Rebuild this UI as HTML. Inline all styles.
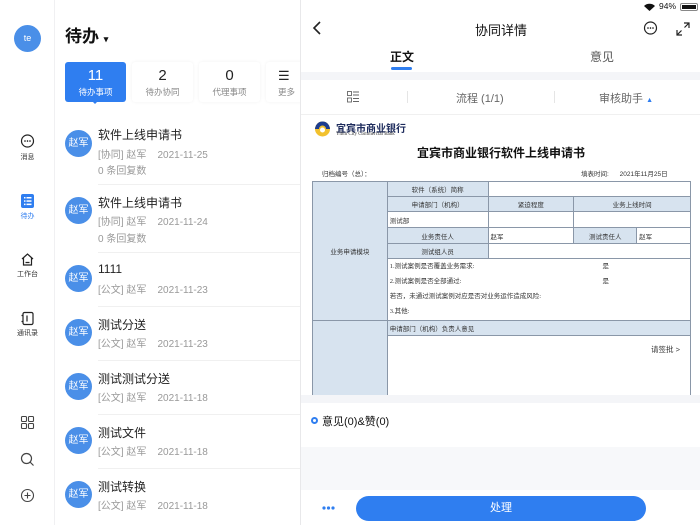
<!DOCTYPE html>
<html><head><meta charset="utf-8"><style>
*{margin:0;padding:0;box-sizing:border-box}
body{width:700px;height:525px;overflow:hidden;background:#fff;font-family:"Liberation Sans","Noto Sans CJK SC",sans-serif;position:relative;color:#222}
.a{position:absolute;white-space:nowrap}
.side{position:absolute;left:0;top:0;width:55px;height:525px;background:#fff;border-right:1px solid #f0f0f2}
.lbl{position:absolute;width:55px;text-align:center;font-size:7px;color:#333}
.list{position:absolute;left:55px;top:0;width:245px;height:525px;background:#fff}
.tab{position:absolute;top:62px;width:61px;height:40px;border-radius:3px;background:#fff;box-shadow:0 0 3px rgba(0,0,0,.06);text-align:center}
.tab b{display:block;font-size:15px;font-weight:normal;margin-top:5px;line-height:17px}
.tab span{display:block;font-size:8.5px;color:#888;margin-top:2px}
.av{position:absolute;left:10px;width:27px;height:27px;border-radius:50%;background:#4a8fe8;color:#fff;font-size:10px;text-align:center;line-height:27px}
.t{position:absolute;left:43px;font-size:12px;color:#222}
.s{position:absolute;left:43px;font-size:10px;color:#999}
.sep{position:absolute;left:43px;right:0;height:1px;background:#f0f0f0}
.right{position:absolute;left:300px;top:0;width:400px;height:525px;background:#fff;border-left:1px solid #e8e8ea}
table{border-collapse:collapse;position:absolute;left:11px;top:181px;width:379px;font-size:6.5px;font-family:"Liberation Serif","Noto Sans CJK SC",serif}
td{border:1px solid #8a97a8;padding:0 2px;color:#333}
.h{background:#d7e3ef;text-align:center}
</style></head><body>
<div class="a" style="left:5px;top:2px;font-size:8.5px;color:#111">下午8:41&nbsp;&nbsp;12月1日 周三</div>

<div class="side">
 <div class="a" style="left:14px;top:25px;width:27px;height:27px;border-radius:50%;background:#4a8fe8;color:#fff;font-size:9px;text-align:center;line-height:27px">te</div>
 <svg class="a" style="left:20px;top:134px" width="15" height="15" viewBox="0 0 15 15"><circle cx="7.5" cy="7" r="6" fill="none" stroke="#222" stroke-width="1.2"/><circle cx="5" cy="7" r=".8"/><circle cx="7.5" cy="7" r=".8"/><circle cx="10" cy="7" r=".8"/></svg>
 <div class="lbl" style="top:152px">消息</div>
 <svg class="a" style="left:21px;top:194px" width="13" height="14" viewBox="0 0 13 14"><rect width="13" height="14" rx="2" fill="#2f7ef0"/><g fill="#fff"><rect x="3" y="3" width="1.5" height="1.5"/><rect x="5.5" y="3" width="5" height="1.5"/><rect x="3" y="6.3" width="1.5" height="1.5"/><rect x="5.5" y="6.3" width="5" height="1.5"/><rect x="3" y="9.6" width="1.5" height="1.5"/><rect x="5.5" y="9.6" width="5" height="1.5"/></g></svg>
 <div class="lbl" style="top:211px;color:#2f7ef0">待办</div>
 <svg class="a" style="left:20px;top:252px" width="15" height="15" viewBox="0 0 15 15"><path d="M2 7L7.5 2L13 7M3.5 6V13H11.5V6M5.5 10.5H9.5" fill="none" stroke="#222" stroke-width="1.2"/></svg>
 <div class="lbl" style="top:269px">工作台</div>
 <svg class="a" style="left:20px;top:311px" width="15" height="15" viewBox="0 0 15 15"><rect x="3" y="1.5" width="10" height="12" rx="1.5" fill="none" stroke="#222" stroke-width="1.2"/><path d="M7 4.5V10.5M1.5 4.5H3.5M1.5 10.5H3.5" stroke="#222" stroke-width="1.2"/></svg>
 <div class="lbl" style="top:328px">通讯录</div>
 <svg class="a" style="left:20px;top:415px" width="15" height="15" viewBox="0 0 15 15"><g fill="none" stroke="#444" stroke-width="1.1"><rect x="1.5" y="1.5" width="5" height="5" rx="1"/><rect x="8.5" y="1.5" width="5" height="5" rx="1"/><rect x="1.5" y="8.5" width="5" height="5" rx="1"/><rect x="8.5" y="8.5" width="5" height="5" rx="1"/></g></svg>
 <svg class="a" style="left:20px;top:452px" width="15" height="15" viewBox="0 0 15 15"><circle cx="6.5" cy="6.5" r="5" fill="none" stroke="#444" stroke-width="1.2"/><path d="M10 10L13.5 13.5" stroke="#444" stroke-width="1.2"/></svg>
 <svg class="a" style="left:20px;top:488px" width="15" height="15" viewBox="0 0 15 15"><circle cx="7.5" cy="7.5" r="6" fill="none" stroke="#444" stroke-width="1.1"/><path d="M7.5 4.5V10.5M4.5 7.5H10.5" stroke="#444" stroke-width="1.1"/></svg>
</div>

<div class="list">
 <div class="a" style="left:10px;top:22px;font-size:17px;font-weight:bold;color:#111">待办 <span style="font-size:9px">▾</span></div>
 <div class="tab" style="left:10px;background:#2f7ef0;box-shadow:none"><b style="color:#fff">11</b><span style="color:#fff">待办事项</span></div>
 <div class="a" style="left:37px;top:101px;width:0;height:0;border:3px solid transparent;border-top-color:#2f7ef0"></div>
 <div class="tab" style="left:77px"><b>2</b><span>待办协同</span></div>
 <div class="tab" style="left:144px"><b>0</b><span>代理事项</span></div>
 <div class="tab" style="left:211px;width:40px;text-align:left;padding-left:12px"><b style="font-size:13px">☰</b><span>更多</span></div>

 <div class="av" style="top:130px">赵军</div><div class="t" style="top:126px">软件上线申请书</div><div class="s" style="top:146px">[协同] 赵军&nbsp;&nbsp;&nbsp;&nbsp;2021-11-25</div><div class="s" style="top:162px">0 条回复数</div><div class="sep" style="top:184px"></div>
 <div class="av" style="top:197px">赵军</div><div class="t" style="top:194px">软件上线申请书</div><div class="s" style="top:213px">[协同] 赵军&nbsp;&nbsp;&nbsp;&nbsp;2021-11-24</div><div class="s" style="top:230px">0 条回复数</div><div class="sep" style="top:252px"></div>
 <div class="av" style="top:265px">赵军</div><div class="t" style="top:262px">1111</div><div class="s" style="top:281px">[公文] 赵军&nbsp;&nbsp;&nbsp;&nbsp;2021-11-23</div><div class="sep" style="top:306px"></div>
 <div class="av" style="top:319px">赵军</div><div class="t" style="top:316px">测试分送</div><div class="s" style="top:335px">[公文] 赵军&nbsp;&nbsp;&nbsp;&nbsp;2021-11-23</div><div class="sep" style="top:360px"></div>
 <div class="av" style="top:373px">赵军</div><div class="t" style="top:370px">测试测试分送</div><div class="s" style="top:389px">[公文] 赵军&nbsp;&nbsp;&nbsp;&nbsp;2021-11-18</div><div class="sep" style="top:414px"></div>
 <div class="av" style="top:427px">赵军</div><div class="t" style="top:424px">测试文件</div><div class="s" style="top:443px">[公文] 赵军&nbsp;&nbsp;&nbsp;&nbsp;2021-11-18</div><div class="sep" style="top:468px"></div>
 <div class="av" style="top:481px">赵军</div><div class="t" style="top:478px">测试转换</div><div class="s" style="top:497px">[公文] 赵军&nbsp;&nbsp;&nbsp;&nbsp;2021-11-18</div>
</div>

<div class="right">
 <svg class="a" style="left:343px;top:3px" width="11" height="8" viewBox="0 0 11 8"><path d="M0 3A8 8 0 0 1 11 3L5.5 8Z" fill="#111"/></svg>
 <div class="a" style="left:358px;top:1px;font-size:8.5px;color:#111">94%</div>
 <div class="a" style="left:379px;top:3px;width:18px;height:8px;border:1px solid #888;border-radius:2px"><div style="margin:1px;width:14px;height:4px;background:#111"></div></div>
 <svg class="a" style="left:11px;top:21px" width="10" height="14" viewBox="0 0 10 14"><path d="M8 1L2 7L8 13" fill="none" stroke="#222" stroke-width="1.6"/></svg>
 <div class="a" style="left:0;width:400px;text-align:center;top:20px;font-size:13px;color:#111">协同详情</div>
 <svg class="a" style="left:342px;top:21px" width="15" height="15" viewBox="0 0 15 15"><circle cx="7.5" cy="7" r="6" fill="none" stroke="#222" stroke-width="1.2"/><circle cx="5" cy="7" r=".8"/><circle cx="7.5" cy="7" r=".8"/><circle cx="10" cy="7" r=".8"/></svg>
 <svg class="a" style="left:375px;top:22px" width="14" height="14" viewBox="0 0 14 14"><path d="M8 1H13V6M13 1L8.5 5.5M6 13H1V8M1 13L5.5 8.5" fill="none" stroke="#222" stroke-width="1.2"/></svg>
 <div class="a" style="left:89px;top:48px;font-size:12px;font-weight:bold;color:#111">正文</div>
 <div class="a" style="left:90px;top:67px;width:21px;height:3px;border-radius:2px;background:#2f7ef0"></div>
 <div class="a" style="left:289px;top:48px;font-size:12px;color:#555">意见</div>
 <div class="a" style="left:0;top:72px;width:400px;height:8px;background:#f4f5f8"></div>
 <svg class="a" style="left:46px;top:91px" width="13" height="12" viewBox="0 0 13 12"><g fill="none" stroke="#666" stroke-width=".9"><rect x=".5" y=".5" width="4" height="4"/><rect x=".5" y="7" width="4" height="4"/><path d="M6 1H12M6 4H12M6 7.5H12M6 10.5H12"/></g></svg>
 <div class="a" style="left:106px;top:91px;width:1px;height:12px;background:#e5e5e5"></div>
 <div class="a" style="left:155px;top:90px;font-size:11px;color:#666">流程 (1/1)</div>
 <div class="a" style="left:253px;top:91px;width:1px;height:12px;background:#e5e5e5"></div>
 <div class="a" style="left:298px;top:90px;font-size:11px;color:#666">审核助手 <span style="color:#2f7ef0;font-size:7px">▲</span></div>
 <div class="a" style="left:0;top:114px;width:400px;height:1px;background:#f0f0f0"></div>

 <svg class="a" style="left:13px;top:121px" width="17" height="16" viewBox="0 0 17 16"><circle cx="8.5" cy="8" r="7.5" fill="#f2c12e"/><path d="M1 8A7.5 7.5 0 0 1 16 8L12 8A3.5 3.5 0 0 0 5 8Z" fill="#1d3d8f"/><circle cx="8.5" cy="9" r="2.5" fill="#fff"/></svg>
 <div class="a" style="left:35px;top:120px;font-size:10px;font-weight:bold;color:#1d2b5c">宜宾市商业银行</div>
 <div class="a" style="left:35px;top:132px;font-size:5px;font-family:'Liberation Serif',serif;color:#333">Yibin City Commercial Bank</div>
 <div class="a" style="left:0;width:400px;text-align:center;top:144px;font-size:12px;font-weight:bold;color:#111">宜宾市商业银行软件上线申请书</div>
 <div class="a" style="left:21px;top:168px;font-size:6.5px;color:#333">归档编号（总）：</div>
 <div class="a" style="left:280px;top:168px;font-size:6.5px;color:#333">填表时间:&nbsp;&nbsp;&nbsp;&nbsp;&nbsp;&nbsp;2021年11月25日</div>

 <table>
  <colgroup><col style="width:75px"><col style="width:101px"><col style="width:86px"><col style="width:63px"><col style="width:54px"></colgroup>
  <tr style="height:15px"><td class="h" rowspan="6">业务申请模块</td><td class="h">软件（系统）简称</td><td colspan="3"></td></tr>
  <tr style="height:15px"><td class="h">申请部门（机构）</td><td class="h">紧迫程度</td><td class="h" colspan="2">业务上线时间</td></tr>
  <tr style="height:16px"><td>测试部</td><td></td><td colspan="2"></td></tr>
  <tr style="height:16px"><td class="h">业务责任人</td><td>赵军</td><td class="h">测试责任人</td><td>赵军</td></tr>
  <tr style="height:15px"><td class="h">测试组人员</td><td colspan="3"></td></tr>
  <tr style="height:62px"><td colspan="4" style="line-height:15px;vertical-align:top">1.测试案例是否覆盖业务需求:<span style="position:absolute;left:290px">是</span><br>2.测试案例是否全部通过:<span style="position:absolute;left:290px">是</span><br>若否，未通过测试案例对应是否对业务运作造成风险:<br>3.其他:</td></tr>
  <tr style="height:15px"><td class="h" rowspan="2"></td><td class="h" colspan="4" style="text-align:left">申请部门（机构）负责人意见</td></tr>
  <tr style="height:60px"><td colspan="4" style="vertical-align:top;text-align:right;padding:8px 10px;font-size:7.5px;font-family:'Liberation Sans','Noto Sans CJK SC',sans-serif">请签批 &gt;</td></tr>
 </table>

 <div class="a" style="left:0;top:395px;width:400px;height:8px;background:#f4f5f8"></div>
 <div class="a" style="left:0;top:403px;width:400px;height:44px;background:#fff"></div>
 <div class="a" style="left:10px;top:417px;width:7px;height:7px;border-radius:50%;border:2px solid #2f7ef0"></div>
 <div class="a" style="left:21px;top:413px;font-size:11px;color:#111">意见(0)&amp;赞(0)</div>
 <div class="a" style="left:0;top:447px;width:400px;height:43px;background:#f7f8fa"></div>
 <div class="a" style="left:0;top:490px;width:400px;height:35px;background:#fff"></div>
 <svg class="a" style="left:21px;top:506px" width="13" height="4" viewBox="0 0 13 4"><circle cx="2" cy="2" r="1.6" fill="#2f7ef0"/><circle cx="6.5" cy="2" r="1.6" fill="#2f7ef0"/><circle cx="11" cy="2" r="1.6" fill="#2f7ef0"/></svg>
 <div class="a" style="left:55px;top:496px;width:290px;height:25px;border-radius:13px;background:#2f7ef0;color:#fff;text-align:center;line-height:25px;font-size:11px">处理</div>
</div>
</body></html>
